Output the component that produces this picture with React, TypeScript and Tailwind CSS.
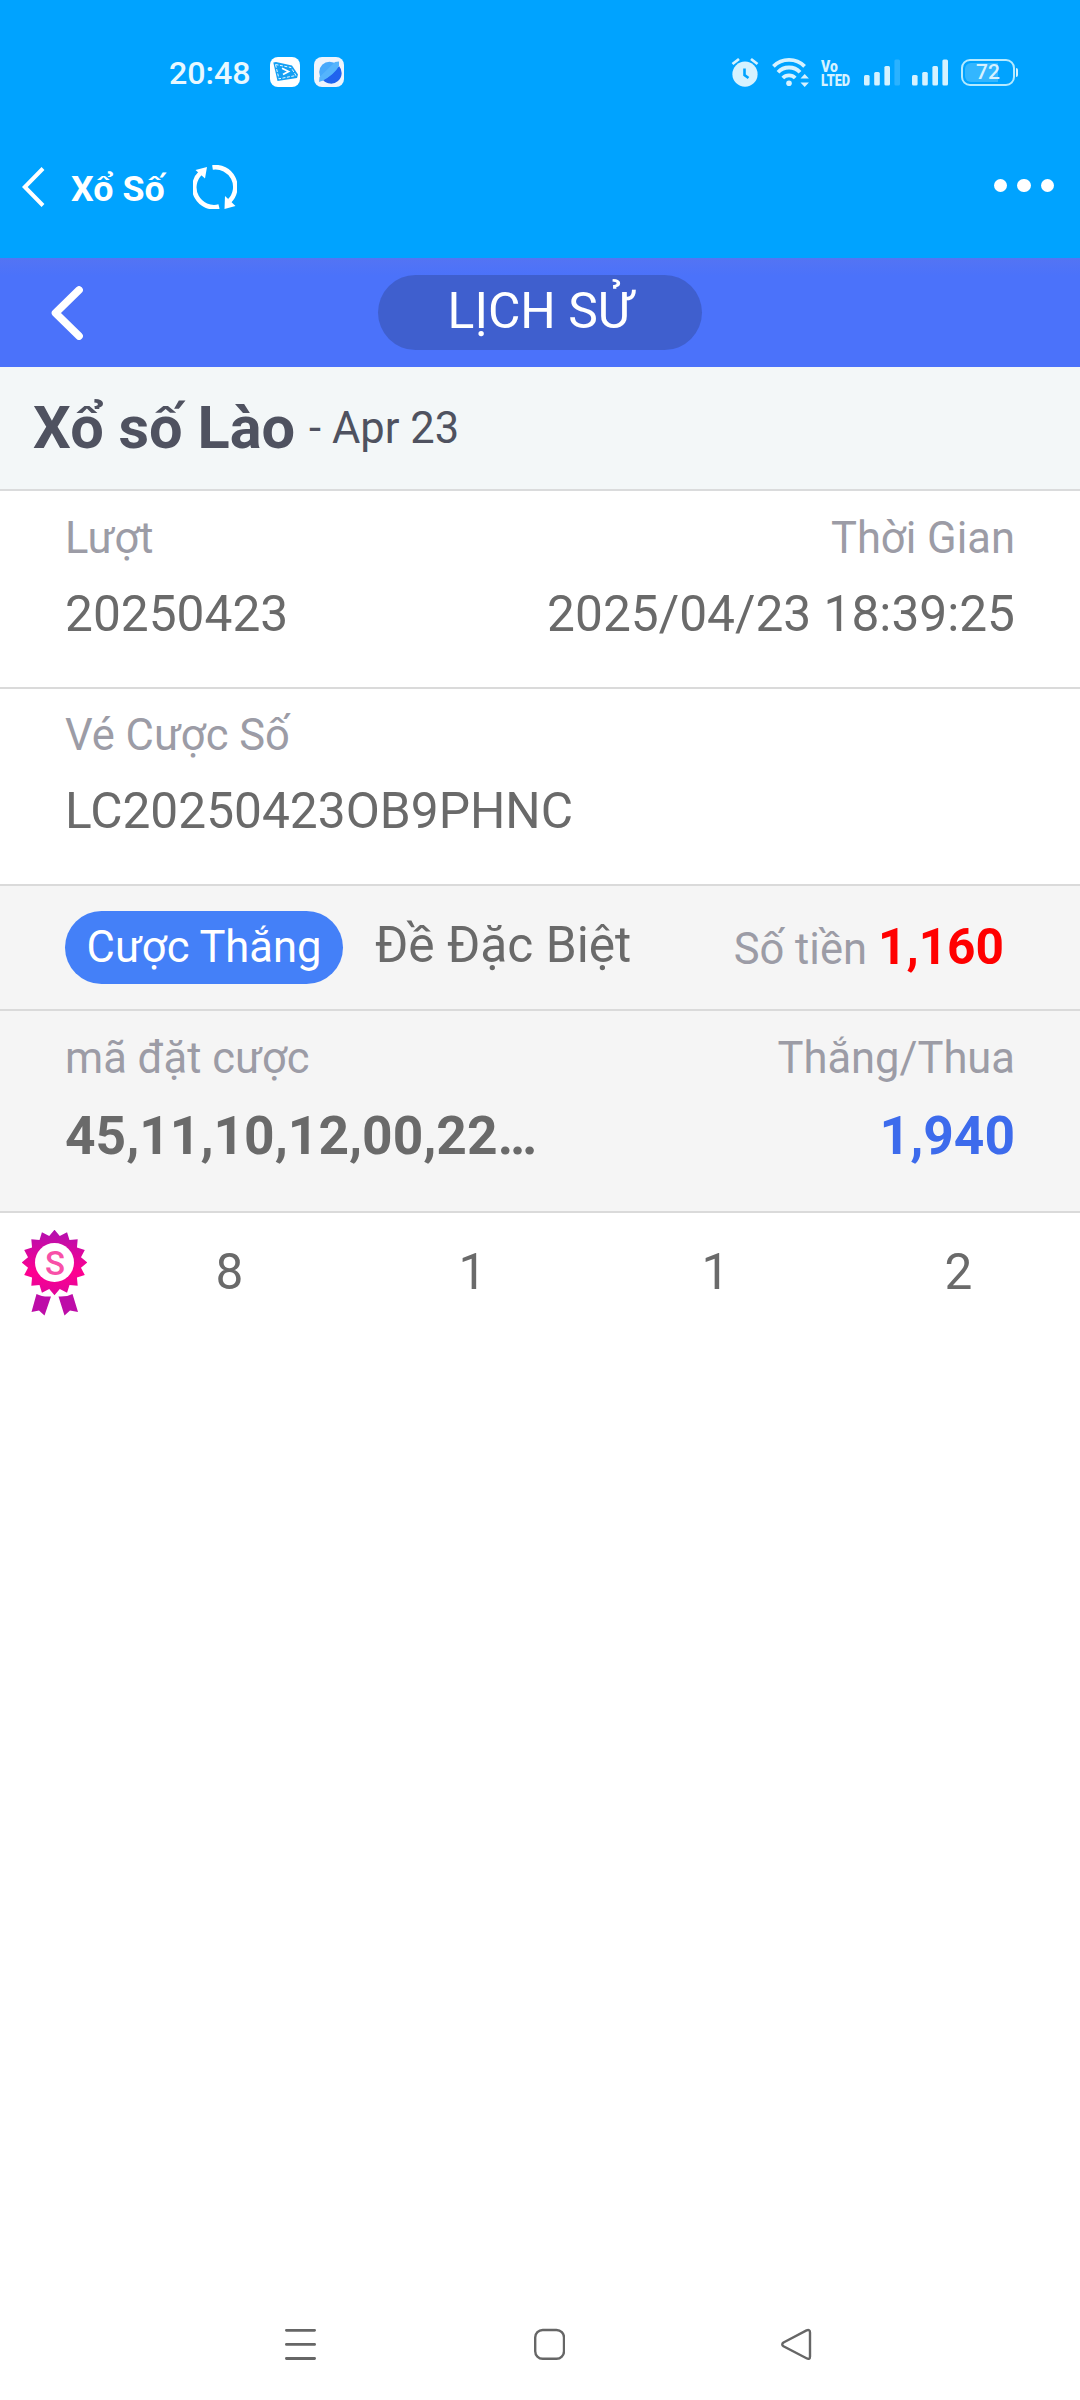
import React from "react";

const LIGHT = "#d6f2ff";

function StatusBar() {
  return (
    <div className="flex h-[144px] items-center pl-[169px] pr-[62px] text-[#d6f2ff]">
      <span className="w-[101px] pt-[2px] text-[32.200px] font-medium leading-none text-[#e8f8ff]">20:48</span>
      <svg className="h-[30px] w-[30px]" viewBox="0 0 30 30">
        <rect width="30" height="30" rx="8" fill="#fff" />
        <path d="M3.300 5.500 L6 5 L22 8.500 L28 17.500 L27 21 L7.500 24 Z" fill="#14a0f4" />
        <path d="M5.500 7.500 L21 10.500 L26 18.500 L9 21.800 Z" fill="none" stroke="#fff" strokeWidth="0.900" strokeDasharray="3 1.500" />
        <path d="M12 11.300 L18.500 14.500 L13 17.500" fill="none" stroke="#fff" strokeWidth="1.800" />
      </svg>
      <svg className="ml-[14px] h-[30px] w-[30px]" viewBox="0 0 30 30">
        <rect width="30" height="30" rx="8" fill="#eef4fc" />
        <circle cx="15.500" cy="15" r="10.300" fill="#47a9fb" />
        <path d="M25 9 A10.300 10.300 0 0 1 9 23 Q20 18 25 9Z" fill="#2063ee" />
        <path d="M21 5 L25 4.500 L25 9 Q19 18 9 23.500 L5 25 L5.500 20 Z" fill="#55b4fc" />
      </svg>
      <div className="flex-1" />
      <svg className="h-[30px] w-[28px]" viewBox="0 0 28 30" fill={LIGHT}>
        <circle cx="14" cy="17.200" r="12.600" />
        <path d="M1.500 7 L8 2 M20 2 L26.500 7" stroke={LIGHT} strokeWidth="2.800" fill="none" />
        <path d="M13.500 11.500 V18 L17.500 21" stroke="#00a3ff" strokeWidth="2.600" fill="none" />
      </svg>
      <svg className="ml-[13px] h-[30px] w-[37px]" viewBox="0 0 37 30" fill="none" stroke={LIGHT} strokeWidth="3.800">
        <path d="M1.400 9.400 A22 22 0 0 1 32.600 9.400" />
        <path d="M6 15.300 A15 15 0 0 1 28 15.300" />
        <path d="M10.800 21 A8.600 8.600 0 0 1 23.200 21" />
        <circle cx="17" cy="26.300" r="2.800" fill={LIGHT} stroke="none" />
        <path d="M28.500 21.500 L32.700 17 L36.900 21.500Z M28.500 25.500 L32.700 30 L36.900 25.500Z" fill={LIGHT} stroke="none" />
      </svg>
      <div className="ml-[12px] flex w-[30px] flex-col pt-px font-['Roboto'] text-[17px] font-black leading-[14px]">
        <span className="origin-left scale-x-[0.82]">Vo</span>
        <span className="origin-left scale-x-[0.75]">LTED</span>
      </div>
      <svg className="ml-[13px] h-[27px] w-[36px]" viewBox="0 0 36 27" fill={LIGHT}>
        <rect x="0" y="16" width="5.600" height="10.500" rx="1.500" />
        <rect x="10.200" y="13" width="5.600" height="13.500" rx="1.500" />
        <rect x="20.400" y="7" width="5.600" height="19.500" rx="1.500" />
        <rect x="30.400" y="0.500" width="5.600" height="26" rx="1.500" opacity="0.2" />
      </svg>
      <svg className="ml-[12px] h-[27px] w-[36px]" viewBox="0 0 36 27" fill={LIGHT}>
        <rect x="0" y="16" width="5.600" height="10.500" rx="1.500" />
        <rect x="10.200" y="13" width="5.600" height="13.500" rx="1.500" />
        <rect x="20.400" y="7" width="5.600" height="19.500" rx="1.500" />
        <rect x="30.400" y="0.500" width="5.600" height="26" rx="1.500" />
      </svg>
      <div className="ml-[13px] flex h-[27px] w-[54px] items-center rounded-[9px] border-2 border-[#b5eaff] p-[2px]">
        <div className="flex h-full w-[46px] items-center justify-center rounded-[6px] bg-[linear-gradient(90deg,#33b6ff_72%,transparent_72%)] text-[21px] font-medium leading-none">72</div>
      </div>
      <div className="ml-[1px] h-[9px] w-[2px] rounded-r bg-[#d6f2ff]" />
    </div>
  );
}

function AppBar() {
  return (
    <div className="flex h-[114px] items-start pl-[22px] pr-[26px] pt-[21px] text-white">
      <svg className="mt-[1px] h-[42px] w-[23px]" viewBox="0 0 23 42" fill="none" stroke="#fff" strokeWidth="4">
        <path d="M21 2.500 L2.800 21 L21 39.500" />
      </svg>
      <span className="ml-[26px] mt-px w-[122px] text-[35.800px] font-bold leading-[46px]">Xổ Số</span>
      <svg className="h-[44px] w-[44px]" viewBox="0 0 44 44" fill="none" stroke="#fff" strokeWidth="4.600">
        <path d="M19.500 2.400 A19.800 19.800 0 0 1 36.500 36" />
        <path d="M26 41.600 A19.800 19.800 0 0 1 7.500 8" />
        <path d="M2.500 5 L14 2 L12 13.500Z M32 31 L42.500 41 L31.500 44Z" fill="#fff" stroke="none" />
      </svg>
      <div className="flex-1" />
      <div className="mt-[13.500px] flex gap-[10px]">
        <i className="size-[13.500px] rounded-full bg-white" />
        <i className="size-[13.500px] rounded-full bg-white" />
        <i className="size-[13.500px] rounded-full bg-white" />
      </div>
    </div>
  );
}

function Header() {
  return (
    <header className="grid h-[109px] grid-cols-3 items-start bg-[linear-gradient(180deg,#5474f4_0px,#4b72fa_18px)] pt-[17px]">
      <svg className="ml-[51px] mt-[11px] h-[54px] w-[32px]" viewBox="0 0 32 54" fill="none" stroke="#fff" strokeWidth="7.600" strokeLinecap="round" strokeLinejoin="round">
        <path d="M28 4 L4.500 27 L28 50" />
      </svg>
      <div className="mx-auto flex h-[75px] w-[324px] justify-center rounded-full bg-[#3f5fce] text-[49.800px] leading-[73px] text-white">LỊCH SỬ</div>
    </header>
  );
}

function Ribbon() {
  const points = Array.from({ length: 32 }, (_, i) => {
    const r = i % 2 ? 27 : 32.8;
    const a = (i * Math.PI) / 16 - Math.PI / 2;
    return `${32.5 + r * Math.cos(a)},${32.5 + r * Math.sin(a)}`;
  }).join(" ");
  return (
    <svg className="ml-[22px] mt-[17px] h-[86px] w-[65px] shrink-0" viewBox="0 0 65 86">
      <defs>
        <linearGradient id="seal" x1="0" y1="0" x2="0" y2="1">
          <stop offset="0" stopColor="#b010b0" />
          <stop offset="0.650" stopColor="#ff0090" />
          <stop offset="1" stopColor="#e0069c" />
        </linearGradient>
      </defs>
      <polygon points={points} fill="url(#seal)" />
      <circle cx="32.500" cy="32.500" r="19.500" fill="#fff" />
      <text x="33" y="44.500" textAnchor="middle" fontSize="33" fontWeight="500" fill="#f850a8">S</text>
      <path d="M14.500 64 Q20 67 29 66.500 L22.500 85.500 L17 80.500 L9.500 82Z M50.500 64 Q45 67 36.500 66.500 L42.500 85.500 L48 80.500 L56 82Z" fill="#bd0da8" />
    </svg>
  );
}

function Field({ label, value, right }: { label: string; value: string; right?: boolean }) {
  return (
    <div className={right ? "flex flex-col items-end gap-[9px]" : "flex flex-col gap-[9px]"}>
      <span className="text-[43.500px] leading-[62px] text-[#9c9ca6]">{label}</span>
      <span className="text-[49.650px] leading-[70px] text-[#6a6a6a]">{value}</span>
    </div>
  );
}

export default function App() {
  return (
    <div className="flex h-[2400px] w-[1080px] flex-col overflow-hidden whitespace-nowrap bg-white font-['Roboto',sans-serif]">
      <div className="bg-[#00a3ff]">
        <StatusBar />
        <AppBar />
      </div>
      <Header />
      <div className="flex h-[124px] items-start border-b-2 border-[#dadbdc] bg-[#f3f7f8] pl-[33px] text-[#4f5260]">
        <span className="mt-[21px] text-[59.500px] font-bold leading-[80px]">Xổ số Lào</span>
        <span className="ml-[14px] mt-[32px] text-[43.500px] leading-[60px]">- Apr 23</span>
      </div>
      <div className="flex h-[198px] justify-between border-b-2 border-[#dadada] px-[65px] pt-[17px]">
        <Field label="Lượt" value="20250423" />
        <Field label="Thời Gian" value="2025/04/23 18:39:25" right />
      </div>
      <div className="h-[197px] border-b-2 border-[#dadada] px-[65px] pt-[16px]">
        <Field label="Vé Cược Số" value="LC20250423OB9PHNC" />
      </div>
      <div className="flex h-[125px] items-start border-b-2 border-[#dadada] bg-[#f5f5f5] pl-[65px] pr-[76px] pt-[25px]">
        <div className="flex h-[73px] w-[278px] justify-center rounded-full bg-[#4480f8] text-[43.500px] leading-[74px] text-white">Cược Thắng</div>
        <span className="ml-[32px] text-[49.700px] leading-[68px] text-[#6a6a6a]">Đề Đặc Biệt</span>
        <div className="ml-auto flex items-baseline gap-[11px] leading-[72px]">
          <span className="text-[43.500px] text-[#9c9ca6]">Số tiền</span>
          <span className="text-[49.600px] font-bold text-[#ff0000]">1,160</span>
        </div>
      </div>
      <div className="flex h-[202px] justify-between border-b-2 border-[#dadada] bg-[#f5f5f5] px-[65px] pt-[17px]">
        <div className="flex flex-col gap-[11px]">
          <span className="text-[43.500px] leading-[62px] text-[#9c9ca6]">mã đặt cược</span>
          <span className="text-[53.300px] font-bold leading-[70px] text-[#6a6a6a]">45,11,10,12,00,22…</span>
        </div>
        <div className="flex flex-col items-end gap-[11px]">
          <span className="text-[43.500px] leading-[62px] text-[#9c9ca6]">Thắng/Thua</span>
          <span className="text-[53.300px] font-bold leading-[70px] text-[#3d6bec]">1,940</span>
        </div>
      </div>
      <div className="flex h-[118px]">
        <Ribbon />
        <div className="ml-[21px] grid flex-1 grid-cols-4 pt-[24px] text-center text-[49.600px] leading-[70px] text-[#6a6a6a]">
          <span>8</span>
          <span>1</span>
          <span>1</span>
          <span>2</span>
        </div>
      </div>
      <nav className="mt-auto flex h-[72px] items-start pl-[285px]">
        <svg className="h-[32px] w-[31px]" viewBox="0 0 31 32" stroke="#666" strokeWidth="2.800" strokeLinecap="round">
          <path d="M1.400 2.300 H29.600 M1.400 16.400 H29.600 M1.400 30.500 H29.600" />
        </svg>
        <svg className="ml-[218px] h-[32px] w-[31px]" viewBox="0 0 31 32" fill="none" stroke="#666" strokeWidth="2.400">
          <rect x="1.200" y="2" width="28.800" height="28.800" rx="7.500" />
        </svg>
        <svg className="ml-[216px] h-[32px] w-[31px]" viewBox="0 0 31 32" fill="none" stroke="#666" strokeWidth="2.400">
          <path d="M2.500 14.500 L25.500 2.400 Q29 1 29 4.500 V28.500 Q29 32 25.500 30.200 L2.500 18.300 Q0 16.400 2.500 14.500Z" />
        </svg>
      </nav>
    </div>
  );
}
